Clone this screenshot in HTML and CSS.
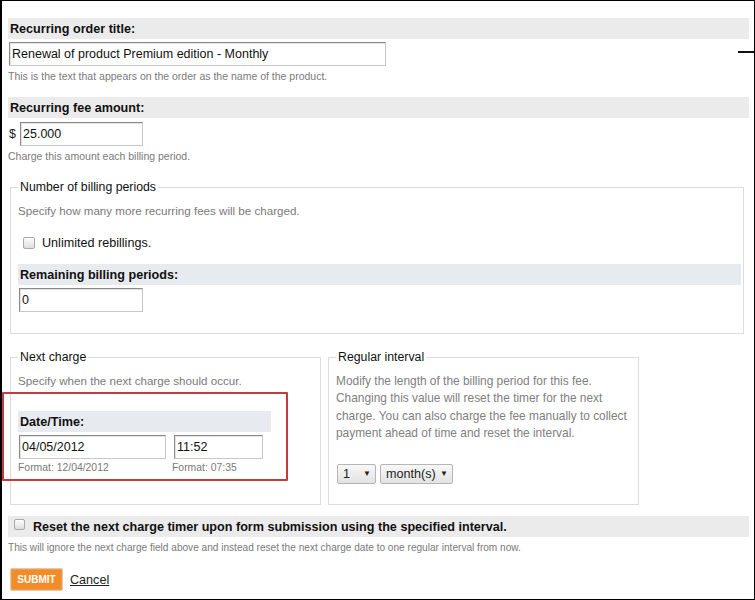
FILE: index.html
```html
<!DOCTYPE html>
<html>
<head>
<meta charset="utf-8">
<link rel="stylesheet" href="styles.css">
</head>
<body>
<div class="page">
  <span class="edge-mark"></span>
  <span class="highlight"></span>

  <div class="bar">Recurring order title:</div>
  <div class="field title-field">Renewal of product Premium edition - Monthly</div>
  <div class="desc">This is the text that appears on the order as the name of the product.</div>

  <div class="bar bar-gap">Recurring fee amount:</div>
  <div class="money-row">
    <span class="dollar">$</span>
    <div class="field fee-field">25.000</div>
  </div>
  <div class="desc">Charge this amount each billing period.</div>

  <fieldset class="group periods">
    <legend>Number of billing periods</legend>
    <div class="desc inner-desc">Specify how many more recurring fees will be charged.</div>
    <div class="check-row">
      <span class="checkbox"></span>
      <span class="check-label">Unlimited rebillings.</span>
    </div>
    <div class="bar blue">Remaining billing periods:</div>
    <div class="field small-field">0</div>
  </fieldset>

  <div class="columns">
    <fieldset class="group half">
      <legend>Next charge</legend>
      <div class="desc inner-desc">Specify when the next charge should occur.</div>
      <div class="bar blue date-bar">Date/Time:</div>
      <div class="datetime">
        <div class="dt-col">
          <div class="field date-field">04/05/2012</div>
          <div class="format">Format: 12/04/2012</div>
        </div>
        <div class="dt-col">
          <div class="field time-field">11:52</div>
          <div class="format">Format: 07:35</div>
        </div>
      </div>
    </fieldset>
    <fieldset class="group half">
      <legend>Regular interval</legend>
      <div class="interval-text">Modify the length of the billing period for this fee. Changing this value will reset the timer for the next charge. You can also charge the fee manually to collect payment ahead of time and reset the interval.</div>
      <div class="selects">
        <span class="select sel-num"><span>1</span><span class="arrow">&#9660;</span></span>
        <span class="select sel-unit"><span>month(s)</span><span class="arrow">&#9660;</span></span>
      </div>
    </fieldset>
  </div>

  <div class="bar reset-bar">
    <span class="checkbox reset-check"></span>
    <span>Reset the next charge timer upon form submission using the specified interval.</span>
  </div>
  <div class="desc reset-desc">This will ignore the next charge field above and instead reset the next charge date to one regular interval from now.</div>

  <div class="actions">
    <span class="submit">SUBMIT</span>
    <a class="cancel" href="#">Cancel</a>
  </div>
</div>
</body>
</html>
```

FILE: styles.css
```css
html, body {
  margin: 0;
  padding: 0;
  background: #fff;
}
body {
  font-family: "Liberation Sans", Arial, sans-serif;
  color: #222;
}
.page {
  position: relative;
  box-sizing: border-box;
  width: 755px;
  height: 600px;
  border: 1px solid #000;
  border-left-width: 2px;
  padding: 17px 5px 0 6px;
  overflow: hidden;
}
.edge-mark {
  position: absolute;
  left: 736px;
  top: 50px;
  width: 16px;
  height: 2px;
  background: #111;
}
.highlight {
  position: absolute;
  left: 0px;
  top: 391px;
  width: 282px;
  height: 85px;
  border: 2px solid #c43b3f;
  border-radius: 1px;
}
.bar {
  height: 21px;
  line-height: 22px;
  background: #ebebeb;
  font-weight: bold;
  font-size: 12.6px;
  padding-left: 2px;
  color: #111;
}
.bar.blue {
  background: #e7ebef;
}
.bar-gap {
  margin-top: 14px;
}
.field {
  box-sizing: border-box;
  height: 24px;
  line-height: 22px;
  border: 1px solid #c8c8c8;
  border-top-color: #8a8a8a;
  border-left-color: #8a8a8a;
  box-shadow: inset 1px 1px 0 #e2e2e2;
  font-size: 12.5px;
  padding-left: 2px;
  color: #111;
  background: #fff;
}
.title-field {
  width: 377px;
  margin: 3px 0 0 1px;
}
.desc {
  font-size: 10.5px;
  line-height: 14px;
  color: #7a7a7a;
  margin-top: 3px;
}
.money-row {
  display: flex;
  align-items: center;
  margin-top: 4px;
}
.dollar {
  font-size: 12.5px;
  width: 11px;
  padding-left: 1px;
  color: #222;
}
.fee-field {
  width: 123px;
}
.group {
  border: 1px solid #dcdcdc;
  margin: 0;
  min-width: 0;
}
.group legend {
  font-size: 12.3px;
  line-height: 16px;
  padding: 0 2px;
  color: #111;
}
.periods {
  margin: 16px 5px 0 2px;
  padding: 0 2px 21px 7px;
}
.inner-desc {
  margin-top: 9px;
  font-size: 11.6px;
}
.check-row {
  display: flex;
  align-items: center;
  margin-top: 16px;
  padding-left: 5px;
  height: 18px;
}
.checkbox {
  display: inline-block;
  box-sizing: border-box;
  width: 12px;
  height: 12px;
  border: 1px solid #a9a9a9;
  border-radius: 2px;
  background: linear-gradient(#fdfdfd, #dedede);
}
.check-label {
  font-size: 12.6px;
  margin-left: 7px;
  color: #111;
}
.periods .bar {
  margin-top: 12px;
}
.small-field {
  width: 124px;
  margin: 3px 0 0 1px;
}
.columns {
  display: flex;
  gap: 7px;
  margin: 15px 0 0 2px;
}
.half {
  width: 311px;
  box-sizing: border-box;
  height: 156px;
  padding: 0 0 0 7px;
}
.date-bar {
  width: 251px;
  margin-top: 23px;
}
.datetime {
  display: flex;
  gap: 8px;
  margin-top: 3px;
  margin-left: 1px;
}
.date-field {
  width: 147px;
}
.time-field {
  width: 89px;
}
.format {
  font-size: 10.4px;
  color: #7a7a7a;
  line-height: 14px;
  margin-top: 2px;
}
.time-field + .format {
  margin-left: -2px;
}
.date-field + .format {
  margin-left: -1px;
}
.interval-text {
  font-size: 11.9px;
  line-height: 17.4px;
  color: #808080;
  margin-top: 8px;
  padding-right: 4px;
}
.selects {
  display: flex;
  gap: 4px;
  margin-top: 21px;
  margin-left: 1px;
}
.select {
  box-sizing: border-box;
  height: 20px;
  display: inline-flex;
  align-items: center;
  justify-content: space-between;
  border: 1px solid #b5b5b5;
  border-radius: 2px;
  background: linear-gradient(#f8f8f8, #e2e2e2);
  font-size: 12.6px;
  color: #222;
  padding: 0 4px 0 5px;
}
.arrow {
  font-size: 8px;
  color: #222;
}
.sel-num {
  width: 39px;
}
.sel-unit {
  width: 73px;
}
.reset-bar {
  margin-top: 11px;
  display: flex;
  align-items: center;
  font-size: 12.6px;
  padding-left: 6px;
}
.reset-check {
  width: 11px;
  height: 11px;
  margin-right: 8px;
  margin-top: -4px;
}
.reset-desc {
  margin-top: 4px;
  font-size: 10.1px;
}
.actions {
  display: flex;
  align-items: center;
  margin-top: 13px;
  margin-left: 2px;
}
.submit {
  display: inline-block;
  box-sizing: border-box;
  width: 53px;
  height: 23px;
  line-height: 21px;
  text-align: center;
  background: #f28c28;
  border: 1px solid #e0c9b4;
  border-radius: 2px;
  box-shadow: inset 0 0 0 1px #f49a44;
  color: #fff;
  font-weight: bold;
  font-size: 10px;
}
.cancel {
  font-size: 12.6px;
  color: #222;
  text-decoration: underline;
  margin-left: 7px;
}
```
